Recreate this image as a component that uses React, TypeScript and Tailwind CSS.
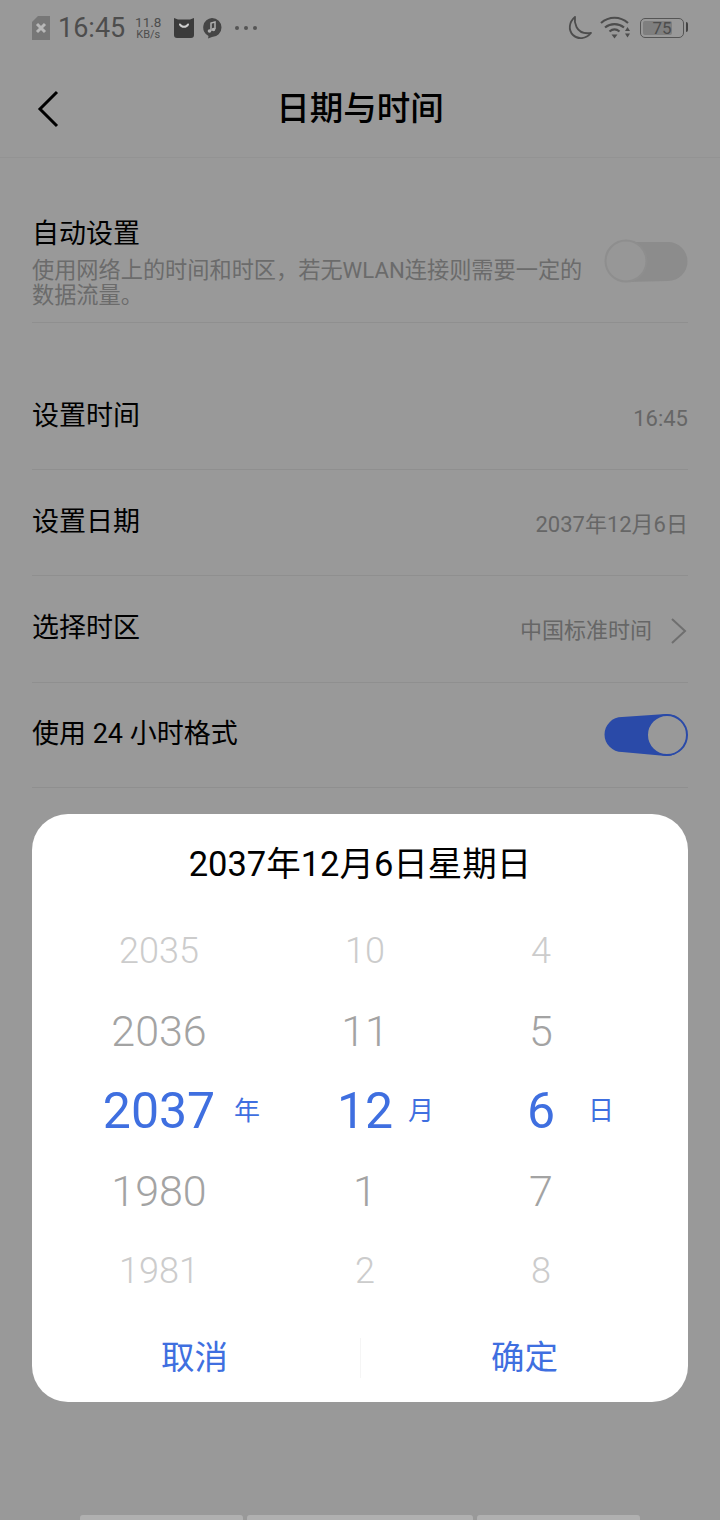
const cjk = "font-['Roboto','Noto_Sans_CJK_SC',sans-serif]";

function StatusBar() {
  return (
    <div className="flex h-[56px] items-center pl-8 pr-[36px] text-[#4d4d4d]">
      <svg width="18" height="24" viewBox="0 0 18 24">
        <path d="M6 0h12v24H0V6z" fill="#777777" />
        <path d="M5 8l8 8M13 8l-8 8" stroke="#b8b8b8" strokeWidth="3" />
      </svg>
      <span className="ml-2 text-[27px] leading-none">16:45</span>
      <div className="ml-[9px] flex w-[28px] flex-col items-center">
        <span className="text-[13.500px] leading-[13px]">11.8</span>
        <span className="text-[11px] leading-[12px]">KB/s</span>
      </div>
      <svg className="ml-[11px]" width="22" height="22" viewBox="0 0 22 22">
        <path d="M1 1l4 1.500h12l4-1.500v17a3 3 0 0 1-3 3H4a3 3 0 0 1-3-3z" fill="#3b3b3b" />
        <path d="M7 7.500c1.500 3 6.500 3 8 0" stroke="#cfcfcf" strokeWidth="2" fill="none" strokeLinecap="round" />
      </svg>
      <svg className="ml-[7px]" width="20" height="22" viewBox="0 0 20 22">
        <path d="M10 1a9.500 9.500 0 0 1 0 19l-4 1.500 .5-2.500A9.500 9.500 0 0 1 10 1z" fill="#454545" />
        <path d="M9 14V6l4-1v7" stroke="#b0b0b0" strokeWidth="1.500" fill="none" />
        <circle cx="7.500" cy="14" r="1.800" fill="#b0b0b0" />
        <circle cx="11.500" cy="12.500" r="1.800" fill="#b0b0b0" />
      </svg>
      <div className="ml-[13px] flex gap-[5px]">
        <span className="h-1 w-1 rounded-full bg-[#555555]" />
        <span className="h-1 w-1 rounded-full bg-[#555555]" />
        <span className="h-1 w-1 rounded-full bg-[#555555]" />
      </div>
      <div className="flex-1" />
      <svg width="26" height="26" viewBox="0 0 26 26" fill="none">
        <path d="M8 2C2 7 1 15 6 20c5 5 13 4 18-2-7 1-12-1-14.500-6C8 9 7.500 5 8 2z" stroke="#4d4d4d" strokeWidth="1.800" strokeLinejoin="round" />
      </svg>
      <svg className="ml-[7px]" width="32" height="24" viewBox="0 0 32 24" fill="none" stroke="#4d4d4d" strokeWidth="2.200">
        <path d="M1 7c8-7 19-7 27 0" />
        <path d="M5 11.500c5.500-4.500 13.500-4.500 19 0" />
        <path d="M9.500 15.500c3-2.500 7-2.500 10 0" />
        <path d="M11.500 18.500h6l-3 4z" fill="#4d4d4d" stroke="none" />
        <path d="M25 15l2.500-4 2.500 4zM25 17.500h5l-2.500 4z" fill="#4d4d4d" stroke="none" />
      </svg>
      <div className="relative ml-2 flex h-[20px] w-[44px] items-center rounded-[5px] border-[1.500px] border-[#555555] p-[2px]">
        <div className="h-full w-[75%] rounded-[2px] bg-[#7f7f7f]" />
        <span className="absolute inset-0 flex items-center justify-center text-[17px] leading-none">75</span>
        <span className="absolute -right-[5px] top-[3px] h-[10px] w-[2px] rounded-r bg-[#444444]" />
      </div>
    </div>
  );
}

function Row({ title, right, chevron, height }: { title: string; right: string; chevron?: boolean; height: string }) {
  return (
    <div className={`flex items-center justify-between border-b border-[#8f8f8f] pb-[1px] ${height}`}>
      <span className="text-[27px] text-black">{title}</span>
      <div className="mt-[4px] flex items-center text-[22px] text-[#666666]">
        <span>{right}</span>
        {chevron && (
          <svg className="ml-[18px]" width="18" height="26" viewBox="0 0 18 26" fill="none" stroke="#6f6f6f" strokeWidth="2">
            <path d="M2 1l13 12L2 25" />
          </svg>
        )}
      </div>
    </div>
  );
}

function Wheel({ values, unit, numWidth, unitGap }: { values: string[]; unit: string; numWidth: string; unitGap: string }) {
  const styles = [
    "h-[73px] text-[36px] font-light text-[#cccccc]",
    "h-[89px] text-[43px] font-light text-[#a3a3a3]",
    "h-[70px] text-[50px] text-[#3f6fe0]",
    "h-[90px] text-[43px] font-light text-[#a3a3a3]",
    "h-[70px] text-[36px] font-light text-[#cccccc]",
  ];
  return (
    <div className="relative flex flex-col items-center">
      {values.map((v, i) => (
        <div key={i} className={`flex items-center justify-center leading-none ${styles[i]} ${numWidth}`}>
          {v}
        </div>
      ))}
      <span className={`absolute top-[184px] text-[26px] leading-none text-[#3f6fe0] ${unitGap}`}>{unit}</span>
    </div>
  );
}

export default function App() {
  return (
    <div className={`relative h-[1520px] w-[720px] overflow-hidden bg-[#999999] ${cjk}`}>
      <StatusBar />

      <div className="relative flex h-[102px] items-center justify-center border-b border-[#939393] pt-[6px]">
        <svg className="absolute left-[37px] top-[34px]" width="22" height="38" viewBox="0 0 22 38" fill="none" stroke="#000000" strokeWidth="3">
          <path d="M20 2L3 19l17 17" />
        </svg>
        <span className="text-[33.500px] font-medium text-black">日期与时间</span>
      </div>

      <div className="px-8">
        <div className="flex h-[165px] items-center justify-between border-b border-[#8f8f8f] pt-[44px]">
          <div className="w-[560px]">
            <div className="text-[27px] leading-[36px] text-black">自动设置</div>
            <div className="mt-[6px] text-[22.200px] leading-[25px] text-[#6b6b6b]">
              使用网络上的时间和时区，若无WLAN连接则需要一定的
              <br />
              数据流量。
            </div>
          </div>
          <svg className="-mt-[3px] shrink-0" width="84" height="44" viewBox="0 0 84 44">
            <path d="M22 3h42a19.500 19.500 0 0 1 0 39L22 43z" fill="#8c8c8c" />
            <circle cx="22" cy="22" r="20.500" fill="#979797" stroke="#8e8e8e" strokeWidth="2" />
          </svg>
        </div>

        <div className="mt-[41px]">
          <Row title="设置时间" right="16:45" height="h-[106px]" />
          <Row title="设置日期" right="2037年12月6日" height="h-[106px]" />
          <Row title="选择时区" right="中国标准时间" chevron height="h-[107px]" />
          <div className="flex h-[105px] items-center justify-between border-b border-[#8f8f8f] pb-[2px]">
            <span className="text-[27px] text-black">使用 24 小时格式</span>
            <svg className="mt-[1px] shrink-0" width="84" height="44" viewBox="0 0 84 44">
              <path d="M18 4l44-3a21 21 0 0 1 0 42L18 39a17.500 17.500 0 0 1 0-35z" fill="#2a4aa8" />
              <circle cx="63" cy="22" r="20" fill="#999999" stroke="#2a4aa8" strokeWidth="2" />
            </svg>
          </div>
        </div>
      </div>

      <div className="absolute left-8 top-[814px] h-[588px] w-[656px] rounded-[36px] bg-white">
        <div className="pt-[28px] text-center text-[34.500px] leading-[44px] text-black">2037年12月6日星期日</div>
        <div className="relative mt-[28px] h-[400px]">
          <div className="absolute left-[47px] top-0">
            <Wheel values={["2035", "2036", "2037", "1980", "1981"]} unit="年" numWidth="w-[160px]" unitGap="left-[155px]" />
          </div>
          <div className="absolute left-[273px] top-0">
            <Wheel values={["10", "11", "12", "1", "2"]} unit="月" numWidth="w-[120px]" unitGap="left-[103px]" />
          </div>
          <div className="absolute left-[449px] top-0">
            <Wheel values={["4", "5", "6", "7", "8"]} unit="日" numWidth="w-[120px]" unitGap="left-[107px]" />
          </div>
        </div>
        <div className="absolute inset-x-0 bottom-0 flex h-[88px] items-center text-[33.500px] text-[#3f6fe0]">
          <div className="w-[328px] pr-[3px] text-center">取消</div>
          <div className="h-[40px] w-px bg-[#f5f5f5]" />
          <div className="flex-1 text-center">确定</div>
        </div>
      </div>

      <div className="absolute left-[80px] top-[1515px] flex gap-[4px]">
        <div className="h-2 w-[163px] rounded-t-[3px] bg-[#b0b0b0]" />
        <div className="h-2 w-[226px] rounded-t-[3px] bg-[#b0b0b0]" />
        <div className="h-2 w-[163px] rounded-t-[3px] bg-[#b0b0b0]" />
      </div>
    </div>
  );
}
